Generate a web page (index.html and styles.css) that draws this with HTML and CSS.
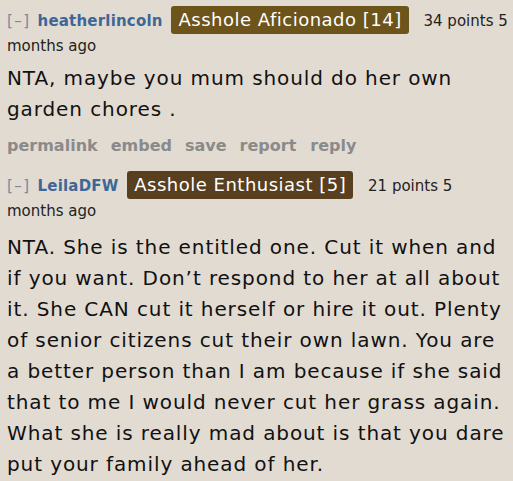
FILE: index.html
```html
<!DOCTYPE html>
<html>
<head>
<meta charset="utf-8">
<link rel="stylesheet" href="styles.css">
</head>
<body>
<div class="comment">
  <p class="tagline"><a class="expand">[–]</a> <a class="author">heatherlincoln</a> <span class="flair flair-a">Asshole Aficionado [14]</span> <span class="score">34 points</span> <span class="time">5 <span class="nowrap">months ago</span></span></p>
  <div class="md first"><p>NTA, maybe you mum should do her own garden chores .</p></div>
  <ul class="buttons">
    <li>permalink</li><li>embed</li><li>save</li><li>report</li><li>reply</li>
  </ul>
</div>
<div class="comment second">
  <p class="tagline"><a class="expand">[–]</a> <a class="author">LeilaDFW</a> <span class="flair flair-b">Asshole Enthusiast [5]</span> <span class="score">21 points</span> <span class="time">5 <span class="nowrap">months ago</span></span></p>
  <div class="md"><p>NTA. She is the entitled one. Cut it when and if you want. Don’t respond to her at all about it. She CAN cut it herself or hire it out. Plenty of senior citizens cut their own lawn. You are a better person than I am because if she said that to me I would never cut her grass again. What she is really mad about is that you dare put your family ahead of her.</p></div>
</div>
</body>
</html>
```
FILE: styles.css
```css
html, body {
  margin: 0;
  padding: 0;
  background: #e2dbd2;
}
body {
  padding: 6px 4px 0 7px;
  font-family: Verdana, "DejaVu Sans", sans-serif;
  color: #111;
}
.tagline {
  margin: 0;
  font-size: 15px;
  line-height: 25px;
  color: #222;
}
.nowrap {
  white-space: nowrap;
}
.expand {
  color: #7a89a2;
  font-weight: normal;
  letter-spacing: 1.5px;
  margin-right: 2px;
}
.author {
  color: #3d6796;
  font-weight: bold;
  letter-spacing: 0.2px;
}
.flair {
  display: inline-block;
  color: #fff;
  font-size: 18px;
  line-height: 28px;
  padding: 0 7px;
  border-radius: 3px;
  margin: 0 10px 0 4px;
  letter-spacing: 0.5px;
}
.flair-a { background: #6c541b; }
.flair-b { background: #573f1f; }
.md p {
  margin: 8px 0 0 0;
  font-size: 20px;
  line-height: 31px;
  letter-spacing: 0.9px;
  color: #111;
}
.md.first p {
  margin-top: 4px;
}
.buttons {
  list-style: none;
  margin: 10px 0 0 0;
  padding: 0;
  display: flex;
  gap: 13px;
  font-size: 16px;
  font-weight: bold;
  color: #8a8a8a;
  line-height: 22px;
}
.buttons li:last-child {
  margin-left: 1px;
}
.comment.second {
  margin-top: 14px;
}
```
